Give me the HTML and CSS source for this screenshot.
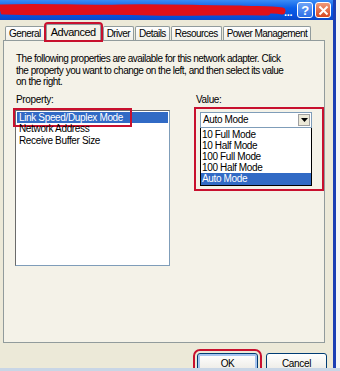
FILE: index.html
```html
<!DOCTYPE html>
<html>
<head>
    <meta charset="utf-8">
    <link rel="stylesheet" href="styles.css">
</head>
<body>
<div class="window">
    <div class="titlebar">
        <svg class="scribble" width="290" height="20" viewBox="0 0 290 20">
            <path d="M1 8 C40 6 80 9 120 8 C160 7 200 9 240 9 C255 10 270 9 282 11" stroke="#e0101a" stroke-width="7" fill="none" stroke-linecap="round"/>
            <path d="M3 12 C50 14 100 11 150 13 C190 14 230 12 268 13" stroke="#e0101a" stroke-width="5" fill="none" stroke-linecap="round"/>
        </svg>
        <span class="dots">...</span>
        <div class="tbtn help">?</div>
        <div class="tbtn close">
            <svg width="11" height="11" viewBox="0 0 11 11"><path d="M1.5 1.5 L9.5 9.5 M9.5 1.5 L1.5 9.5" stroke="#fff" stroke-width="2"/></svg>
        </div>
    </div>
    <div class="body">
        <div class="tabs">
            <div class="tab">General</div>
            <div class="tab active">Advanced</div>
            <div class="tab">Driver</div>
            <div class="tab">Details</div>
            <div class="tab">Resources</div>
            <div class="tab">Power Management</div>
        </div>
        <div class="panel">
            <p class="intro">The following properties are available for this network adapter. Click<br>the property you want to change on the left, and then select its value<br>on the right.</p>
            <div class="cols">
                <div class="col-left">
                    <div class="label">Property:</div>
                    <div class="listbox">
                        <div class="item selected"><span class="mark">Link Speed/Duplex Mode</span></div>
                        <div class="item">Network Address</div>
                        <div class="item">Receive Buffer Size</div>
                    </div>
                </div>
                <div class="col-right">
                    <div class="label">Value:</div>
                    <div class="annot">
                        <div class="combo">
                            <span>Auto Mode</span>
                            <div class="arrow"><svg width="7" height="4" viewBox="0 0 7 4"><path d="M0 0 H7 L3.5 4 Z" fill="#000"/></svg></div>
                        </div>
                        <div class="droplist">
                            <div class="opt">10 Full Mode</div>
                            <div class="opt">10 Half Mode</div>
                            <div class="opt">100 Full Mode</div>
                            <div class="opt">100 Half Mode</div>
                            <div class="opt selected">Auto Mode</div>
                        </div>
                    </div>
                </div>
            </div>
        </div>
        <div class="buttons">
            <div class="btn ok">OK</div>
            <div class="btn">Cancel</div>
        </div>
    </div>
</div>
<div class="under"></div>
</body>
</html>
```

FILE: styles.css
```css
body{
    margin:0;
    width:340px;
    height:371px;
    overflow:hidden;
    background:#f4f6f8;
    font-family:"Liberation Sans", Arial, sans-serif;
    font-size:10px;
    letter-spacing:-0.35px;
    color:#000;
    position:relative;
}
.window{
    width:333px;
    height:371px;
    background:#ece9d8;
    border-right:3px solid #1c3fb4;
}
.titlebar{
    height:20px;
    background:linear-gradient(#3b8cf5, #0a5ee8 40%, #0650dc 80%, #0a47c8);
    display:flex;
    align-items:center;
    position:relative;
}
.scribble{
    flex:0 0 auto;
}
.dots{
    color:#fff;
    font-weight:bold;
    font-size:11px;
    margin-left:-6px;
    margin-top:3px;
}
.tbtn{
    width:16px;
    height:16px;
    border:1px solid #fff;
    border-radius:3px;
    box-sizing:border-box;
    display:flex;
    align-items:center;
    justify-content:center;
    color:#fff;
    font-weight:bold;
    font-size:13px;
}
.help{
    margin-left:auto;
    background:linear-gradient(#6fa3f7, #2b6ee6);
}
.close{
    margin-left:2px;
    margin-right:2px;
    background:linear-gradient(#f09a7a, #d8471f);
}
.body{
    padding:5px 0 0 3px;
}
.tabs{
    display:flex;
    padding-left:2px;
    height:15px;
    align-items:flex-end;
    position:relative;
    z-index:1;
}
.tab{
    height:13px;
    line-height:13px;
    padding:0 3px;
    margin-right:1px;
    border:1px solid #919b9c;
    border-bottom:none;
    border-radius:2px 2px 0 0;
    background:linear-gradient(#fefefe, #f0efe8);
    white-space:nowrap;
    letter-spacing:-0.55px;
}
.tab.active{
    height:15px;
    line-height:15px;
    background:#f4f2e8;
    outline:2px solid #c8102e;
    margin:0 2px 0 0;
    padding:0 4px;
    font-size:11px;
    letter-spacing:-0.5px;
}
.panel{
    width:322px;
    height:303px;
    border:1px solid #919b9c;
    background:#f4f2e8;
    padding:12px 0 0 12px;
    box-sizing:border-box;
}
.intro{
    margin:0;
    line-height:11.5px;
    letter-spacing:-0.5px;
}
.cols{
    display:flex;
    margin-top:6px;
}
.col-left{
    width:157px;
}
.label{
    line-height:12px;
    margin-bottom:4px;
}
.listbox{
    margin-left:-1px;
    height:156px;
    background:#fff;
    border:1px solid #7f9db9;
    border-top-color:#6b6b6b;
    border-left-color:#6b6b6b;
    padding:1px;
    box-sizing:border-box;
}
.item{
    line-height:11.5px;
    padding-left:2px;
}
.item.selected{
    background:#316ac5;
    color:#fff;
}
.mark{
    display:inline-block;
    outline:2px solid #c8102e;
    outline-offset:2px;
    padding-right:5px;
    margin-left:-2px;
    padding-left:2px;
}
.col-right{
    margin-left:24px;
}
.col-right .label{
    margin-left:2px;
    margin-bottom:1px;
}
.annot{
    width:130px;
    height:84px;
    border:2px solid #c8102e;
    padding:3px 10px 0 4px;
    box-sizing:border-box;
}
.combo{
    height:16px;
    background:#fff;
    border:1px solid #7f9db9;
    display:flex;
    align-items:center;
    padding-left:2px;
    box-sizing:border-box;
}
.arrow{
    margin-left:auto;
    width:12px;
    height:12px;
    margin-right:1px;
    background:#ece9d8;
    border:1px solid #a0a0a0;
    box-sizing:border-box;
    display:flex;
    align-items:center;
    justify-content:center;
}
.droplist{
    background:#fff;
    border:1px solid #000;
    border-top:none;
    padding-top:1px;
}
.opt{
    line-height:11.2px;
    padding-left:1px;
}
.opt.selected{
    background:#316ac5;
    color:#fff;
}
.buttons{
    display:flex;
    justify-content:flex-end;
    gap:8px;
    padding:10px 6px 0 0;
}
.btn{
    width:61px;
    height:21px;
    box-sizing:border-box;
    border:1px solid #003c74;
    border-radius:3px;
    background:linear-gradient(#ffffff, #ecebe6 85%, #d6d0c5);
    text-align:center;
    line-height:19px;
}
.btn.ok{
    outline:2px solid #c8102e;
    outline-offset:2px;
    box-shadow:inset 0 0 0 2px #a6c4f0;
}
.under{
    position:absolute;
    left:0;
    right:0;
    bottom:0;
    height:3px;
    background:#c9d6e6;
}
```
